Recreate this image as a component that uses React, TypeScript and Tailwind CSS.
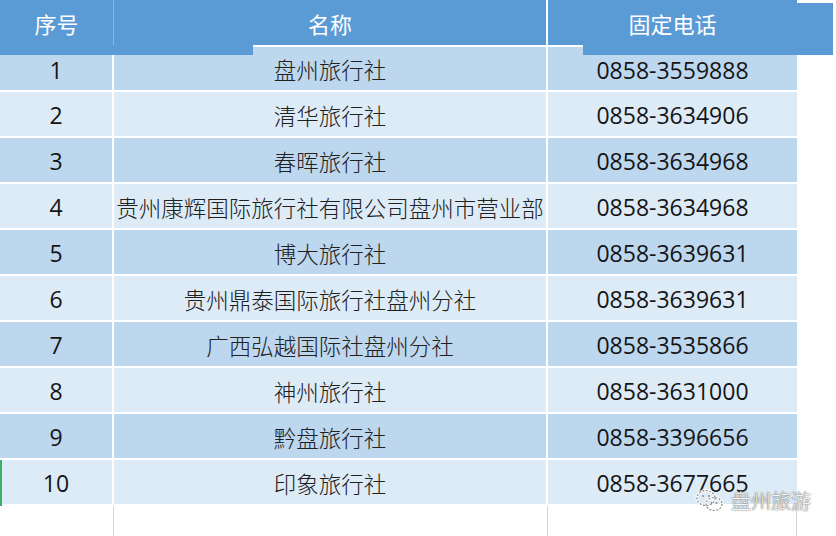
import React from "react";

const rows: [string, string, string][] = [
  ["1", "盘州旅行社", "0858-3559888"],
  ["2", "清华旅行社", "0858-3634906"],
  ["3", "春晖旅行社", "0858-3634968"],
  ["4", "贵州康辉国际旅行社有限公司盘州市营业部", "0858-3634968"],
  ["5", "博大旅行社", "0858-3639631"],
  ["6", "贵州鼎泰国际旅行社盘州分社", "0858-3639631"],
  ["7", "广西弘越国际社盘州分社", "0858-3535866"],
  ["8", "神州旅行社", "0858-3631000"],
  ["9", "黔盘旅行社", "0858-3396656"],
  ["10", "印象旅行社", "0858-3677665"],
];

const cjk = "font-['Noto_Sans_CJK_SC',sans-serif]";
const num = "font-['Open_Sans','Noto_Sans_CJK_SC',sans-serif]";

export default function App() {
  return (
    <div className="relative w-[836px] h-[536px] bg-white overflow-hidden">
      <div className="flex flex-col w-[797px]">
        {/* header */}
        <div className="flex h-[47px] border-b-2 border-white bg-[#5b9bd5] text-white text-[22px] font-normal">
          <div className={`w-[114px] border-r border-[#8db8e2] flex items-center justify-center pt-[1px] ${cjk}`}>序号</div>
          <div className={`w-[434px] border-r-2 border-white flex items-center justify-center pt-[1px] ${cjk}`}>名称</div>
          <div className={`flex-1 flex items-center justify-center pt-[1px] ${cjk}`}>固定电话</div>
        </div>
        {rows.map((r, i) => (
          <div
            key={r[0]}
            className={`flex ${i === 0 ? "h-[45px]" : "h-[46px]"} border-b-2 border-white ${
              i % 2 === 0 ? "bg-[#bdd7ee]" : "bg-[#ddebf7]"
            } text-[#151515]`}
          >
            <div className={`w-[114px] border-r-2 border-white flex items-center justify-center pt-[3px] text-[23px] ${num}`}>
              {r[0]}
            </div>
            <div className={`w-[434px] border-r-2 border-white flex items-center justify-center pt-[3px] text-[22.5px] font-light text-[#202020] whitespace-nowrap ${cjk}`}>
              {r[1]}
            </div>
            <div className={`flex-1 flex items-center justify-center pt-[3px] text-[23px] ${num}`}>{r[2]}</div>
          </div>
        ))}
        {/* empty area below */}
        <div className="flex h-[40px]">
          <div className="w-[114px] border-r border-[#d4d4d4]" />
          <div className="w-[434px] border-r border-[#d4d4d4]" />
          <div className="flex-1 border-r border-[#d4d4d4]" />
        </div>
      </div>

      {/* header overlap pieces */}
      <div className="absolute left-0 top-[45px] w-[253px] h-[10px] bg-[#5b9bd5]" />
      <div className="absolute left-[583px] top-[45px] w-[250px] h-[10px] bg-[#5b9bd5]" />
      <div className="absolute left-[797px] top-[3px] w-[36px] h-[44px] bg-[#5b9bd5]" />
      <div className="absolute left-0 top-[460px] w-[2px] h-[46px] bg-[#3fae6a]" />

      {/* watermark */}
      <div className="absolute left-[695px] top-[488px] flex items-center gap-[6px]">
        <svg width="30" height="26" viewBox="0 0 30 26" fill="none">
          <g stroke="#ffffff" strokeWidth="3" opacity="0.9">
            <ellipse cx="11" cy="10" rx="9" ry="7.5" />
            <ellipse cx="19" cy="16" rx="8" ry="6.5" />
          </g>
          <g stroke="#8a8a8a" strokeWidth="1.2" strokeDasharray="2 1.5">
            <ellipse cx="11" cy="10" rx="9" ry="7.5" />
            <ellipse cx="19" cy="16" rx="8" ry="6.5" />
          </g>
          <circle cx="8" cy="8" r="1" fill="#8a8a8a" />
          <circle cx="14" cy="8" r="1" fill="#8a8a8a" />
          <circle cx="16.5" cy="15" r="0.9" fill="#8a8a8a" />
          <circle cx="21.5" cy="15" r="0.9" fill="#8a8a8a" />
        </svg>
        <span
          className={`text-[20px] leading-none font-light text-[#f4f4f4] [text-shadow:0_0_1px_#555,0_0_2px_#777] ${cjk}`}
        >
          盘州旅游
        </span>
      </div>
    </div>
  );
}
